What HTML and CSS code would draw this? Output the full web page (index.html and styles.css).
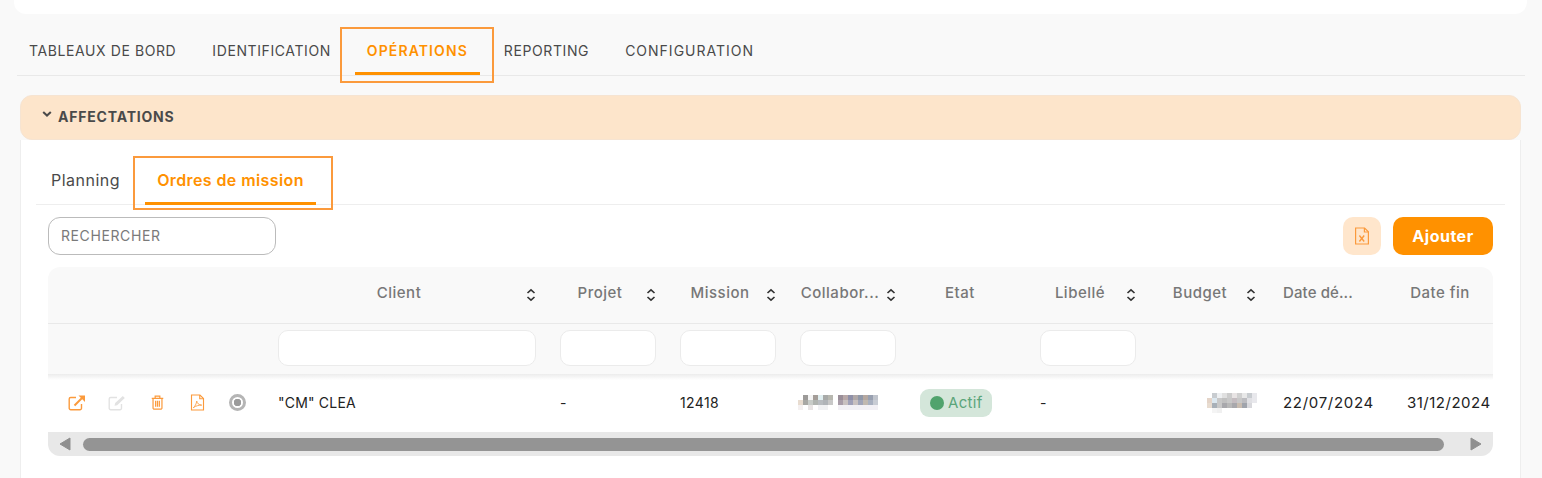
FILE: index.html
```html
<!DOCTYPE html>
<html lang="fr">
<head>
    <meta charset="UTF-8">
    <meta name="viewport" content="width=device-width, initial-scale=1.0">
    <title>Ordres de mission</title>
    <link rel="stylesheet" href="styles.css">
</head>
<body>

    <div class="top-card"></div>

    <nav class="main-tabs">
        <a class="main-tab">TABLEAUX DE BORD</a>
        <a class="main-tab">IDENTIFICATION</a>
        <a class="main-tab active">OPÉRATIONS<span class="mark"></span></a>
        <a class="main-tab">REPORTING</a>
        <a class="main-tab">CONFIGURATION</a>
    </nav>

    <section class="panel">
        <div class="panel-head">
            <svg class="chevron" viewBox="0 0 10 6" width="10" height="6"><path d="M1.2 1 5 4.6 8.8 1" fill="none" stroke="#4a4a4a" stroke-width="2"/></svg>
            <span>AFFECTATIONS</span>
        </div>

        <div class="panel-body">
            <div class="sub-tabs">
                <a class="sub-tab">Planning</a>
                <a class="sub-tab active">Ordres de mission<span class="mark"></span></a>
            </div>

            <div class="toolbar">
                <input class="search" type="text" placeholder="RECHERCHER">
                <div class="actions">
                    <button class="btn-excel" type="button">
                        <svg viewBox="0 0 16 18" width="16" height="18" fill="none" stroke="#fb9a3c" stroke-width="1.2"><path d="M1.6 1h9l3.8 3.8v12.2H1.600z"/><path d="M10.400 1v4h4"/><path d="M5.400 8.500l4.800 6M10.200 8.500l-4.800 6" stroke-width="1.400"/></svg>
                    </button>
                    <button class="btn-add" type="button">Ajouter</button>
                </div>
            </div>

            <div class="table-wrap">
                <table class="grid">
                    <colgroup>
                        <col class="c-actions"><col class="c-client"><col class="c-std"><col class="c-std"><col class="c-std"><col class="c-std"><col class="c-std"><col class="c-std"><col class="c-std"><col class="c-std">
                    </colgroup>
                    <thead>
                        <tr class="head-row">
                            <th></th>
                            <th><div class="th"><span class="th-label">Client</span><svg class="sort" viewBox="0 0 10 14"><path d="M1.500 5 5 1.800 8.500 5M1.500 9 5 12.200 8.500 9"/></svg></div></th>
                            <th><div class="th"><span class="th-label">Projet</span><svg class="sort" viewBox="0 0 10 14"><path d="M1.500 5 5 1.800 8.500 5M1.500 9 5 12.200 8.500 9"/></svg></div></th>
                            <th><div class="th"><span class="th-label">Mission</span><svg class="sort" viewBox="0 0 10 14"><path d="M1.500 5 5 1.800 8.500 5M1.500 9 5 12.200 8.500 9"/></svg></div></th>
                            <th><div class="th"><span class="th-label">Collabor...</span><svg class="sort" viewBox="0 0 10 14"><path d="M1.500 5 5 1.800 8.500 5M1.500 9 5 12.200 8.500 9"/></svg></div></th>
                            <th><div class="th"><span class="th-label">Etat</span><span class="sort"></span></div></th>
                            <th><div class="th"><span class="th-label">Libellé</span><svg class="sort" viewBox="0 0 10 14"><path d="M1.500 5 5 1.800 8.500 5M1.500 9 5 12.200 8.500 9"/></svg></div></th>
                            <th><div class="th"><span class="th-label">Budget</span><svg class="sort" viewBox="0 0 10 14"><path d="M1.500 5 5 1.800 8.500 5M1.500 9 5 12.200 8.500 9"/></svg></div></th>
                            <th><div class="th"><span class="th-label th-date">Date dé...</span><span class="sort"></span></div></th>
                            <th><div class="th"><span class="th-label">Date fin</span><span class="sort"></span></div></th>
                        </tr>
                        <tr class="filter-row">
                            <th></th>
                            <th><input class="filter" type="text"></th>
                            <th><input class="filter" type="text"></th>
                            <th><input class="filter" type="text"></th>
                            <th><input class="filter" type="text"></th>
                            <th></th>
                            <th><input class="filter" type="text"></th>
                            <th></th>
                            <th></th>
                            <th></th>
                        </tr>
                    </thead>
                    <tbody>
                        <tr class="data-row">
                            <td class="row-icons">
                                <div class="icons">
                                    <span class="ic"><svg viewBox="0 0 18 18" width="18" height="18" fill="none" stroke="#fb9a3c" stroke-width="1.400"><path d="M8 3.500H2.700a1.500 1.500 0 0 0-1.500 1.500v9.300a1.500 1.500 0 0 0 1.500 1.500H12a1.500 1.500 0 0 0 1.500-1.500V10"/><path d="M6.500 11.500 14 4" stroke-width="2"/><path d="M10.500 1.500H17V8z" fill="#fb9a3c" stroke="none"/></svg></span>
                                    <span class="ic"><svg viewBox="0 0 18 18" width="18" height="18" fill="none" stroke="#e2e2e2" stroke-width="1.400"><path d="M9 3.500H2.700a1.500 1.500 0 0 0-1.500 1.500v9.300a1.500 1.500 0 0 0 1.500 1.500H12a1.500 1.500 0 0 0 1.500-1.500V10"/><path d="M6.500 11.800l.7-2.800 7.600-7 2 2-7.600 7.200z" fill="#e2e2e2" stroke="none"/></svg></span>
                                    <span class="ic"><svg viewBox="0 0 14 16" width="13" height="15" fill="none" stroke="#fb9a3c" stroke-width="1.300"><path d="M.8 3.500h12.400M4.500 3.500V1.200h5v2.300M2.200 3.500v10.300a1.400 1.400 0 0 0 1.400 1.400h6.800a1.400 1.400 0 0 0 1.400-1.400V3.500M5 6v6.500M7 6v6.500M9 6v6.500"/></svg></span>
                                    <span class="ic"><svg viewBox="0 0 16 18" width="15" height="17" fill="none" stroke="#fb9a3c" stroke-width="1.200"><path d="M1.600 1h9l3.800 3.800v12.200H1.600z"/><path d="M10.400 1v4h4"/><path d="M3.500 14.500c2-1.500 3.200-4 3.700-7 .6 2.500 2 4 5.300 4.300-3-.2-6 .8-9 2.700z" stroke-width=".9"/></svg></span>
                                    <span class="ic"><span class="radio"></span></span>
                                </div>
                            </td>
                            <td class="client">"CM" CLEA</td>
                            <td>-</td>
                            <td>12418</td>
                            <td>
                                <!-- nom flouté dans la capture -->
                                <svg class="blur collab" width="80" height="15" viewBox="0 0 16 3" shape-rendering="crispEdges">
                                    <rect x="1" y="0" width="1" height="1" fill="#9c9a98"/><rect x="2" y="0" width="1" height="1" fill="#f4f4f4"/><rect x="3" y="0" width="1" height="1" fill="#a49d98"/><rect x="4" y="0" width="1" height="1" fill="#e0eef0"/><rect x="5" y="0" width="1" height="1" fill="#a8aaa8"/><rect x="6" y="0" width="1" height="1" fill="#b8b8b0"/>
                                    <rect x="8" y="0" width="1" height="1" fill="#9a8e98"/><rect x="9" y="0" width="1" height="1" fill="#b8a8a8"/><rect x="10" y="0" width="1" height="1" fill="#8f90a8"/><rect x="11" y="0" width="1" height="1" fill="#b0a8a8"/><rect x="12" y="0" width="1" height="1" fill="#9098a8"/><rect x="13" y="0" width="1" height="1" fill="#b5a8a0"/><rect x="14" y="0" width="1" height="1" fill="#98a0b0"/><rect x="15" y="0" width="1" height="1" fill="#c0c4cc"/>
                                    <rect x="0" y="1" width="1" height="1" fill="#e8dcd0"/><rect x="1" y="1" width="1" height="1" fill="#a8a8a4"/><rect x="2" y="1" width="1" height="1" fill="#c8ccc8"/><rect x="3" y="1" width="1" height="1" fill="#b0b4b0"/><rect x="4" y="1" width="1" height="1" fill="#b8bcc0"/><rect x="5" y="1" width="1" height="1" fill="#b0b4b8"/><rect x="6" y="1" width="1" height="1" fill="#c8c8c8"/>
                                    <rect x="8" y="1" width="1" height="1" fill="#a89ca8"/><rect x="9" y="1" width="1" height="1" fill="#c8c0c0"/><rect x="10" y="1" width="1" height="1" fill="#a0a0b8"/><rect x="11" y="1" width="1" height="1" fill="#c8c0c0"/><rect x="12" y="1" width="1" height="1" fill="#a0a4b8"/><rect x="13" y="1" width="1" height="1" fill="#c0b8b0"/><rect x="14" y="1" width="1" height="1" fill="#a8b0c0"/><rect x="15" y="1" width="1" height="1" fill="#c8ccd4"/>
                                    <rect x="0" y="2" width="1" height="1" fill="#f4f0f0"/><rect x="2" y="2" width="1" height="1" fill="#e8e4e4"/><rect x="4" y="2" width="2" height="1" fill="#f0f1f3"/><rect x="8" y="2" width="8" height="1" fill="#f2f0f5"/>
                                </svg>
                            </td>
                            <td><span class="status"><i class="dot"></i>Actif</span></td>
                            <td>-</td>
                            <td>
                                <svg class="blur budget" width="50" height="20" viewBox="0 0 10 4" shape-rendering="crispEdges">
                                    <rect x="1" y="0" width="1" height="1" fill="#c8ccd0"/><rect x="2" y="0" width="1" height="1" fill="#eef0f2"/><rect x="3" y="0" width="1" height="1" fill="#e0e0e0"/><rect x="4" y="0" width="1" height="1" fill="#cccccc"/><rect x="5" y="0" width="1" height="1" fill="#e8e4e4"/><rect x="6" y="0" width="1" height="1" fill="#d0d0d0"/><rect x="7" y="0" width="1" height="1" fill="#e8e8e8"/><rect x="8" y="0" width="1" height="1" fill="#c8ccd0"/><rect x="9" y="0" width="1" height="1" fill="#e8e8ec"/>
                                    <rect x="0" y="1" width="1" height="1" fill="#e4d4c8"/><rect x="1" y="1" width="1" height="1" fill="#dce8f0"/><rect x="2" y="1" width="1" height="1" fill="#c8c8c8"/><rect x="3" y="1" width="1" height="1" fill="#c0c0c0"/><rect x="4" y="1" width="1" height="1" fill="#c8c8c8"/><rect x="5" y="1" width="1" height="1" fill="#c4bcc0"/><rect x="6" y="1" width="1" height="1" fill="#c8c8c8"/><rect x="7" y="1" width="1" height="1" fill="#bcbcc0"/><rect x="8" y="1" width="1" height="1" fill="#e0e0e4"/><rect x="9" y="1" width="1" height="1" fill="#e8e8ec"/>
                                    <rect x="0" y="2" width="1" height="1" fill="#e8dcd0"/><rect x="1" y="2" width="1" height="1" fill="#a8b0b8"/><rect x="2" y="2" width="1" height="1" fill="#c8c8c8"/><rect x="3" y="2" width="1" height="1" fill="#a8a8ac"/><rect x="4" y="2" width="1" height="1" fill="#b8b8b8"/><rect x="5" y="2" width="1" height="1" fill="#a8a8ac"/><rect x="6" y="2" width="1" height="1" fill="#c8bcb0"/><rect x="7" y="2" width="1" height="1" fill="#a0a4ac"/><rect x="8" y="2" width="1" height="1" fill="#d8d8dc"/>
                                    <rect x="1" y="3" width="1" height="1" fill="#f4f4f4"/><rect x="2" y="3" width="1" height="1" fill="#f0f0f0"/>
                                </svg>
                            </td>
                            <td class="date">22/07/2024</td>
                            <td class="date date-end">31/12/2024</td>
                        </tr>
                    </tbody>
                </table>
                <div class="scrollbar">
                    <svg viewBox="0 0 12 14" width="12" height="14"><path d="M11 1v12L1 7z" fill="#8f8f8f" stroke="#8f8f8f" stroke-linejoin="round"/></svg>
                    <div class="thumb"></div>
                    <svg viewBox="0 0 12 14" width="12" height="14"><path d="M1 1v12l10-6z" fill="#8f8f8f" stroke="#8f8f8f" stroke-linejoin="round"/></svg>
                </div>
            </div>
        </div>
    </section>

</body>
</html>
```

FILE: styles.css
```css
* {
    margin: 0;
    padding: 0;
    box-sizing: border-box;
}
body {
    font-family: Inter, "Noto Sans", Arial, sans-serif;
    background-color: #f9f9f9;
    color: #444;
    font-size: 14px;
    height: 478px;
    overflow: hidden;
    padding: 0 17px 0 14px;
}
.top-card {
    height: 14px;
    background-color: #fff;
    border-radius: 0 0 12px 12px;
    margin-right: -2px;
}
.main-tabs {
    display: flex;
    gap: 12px;
    height: 62px;
    margin: 0 0 19px 3px;
    padding-top: 13px;
    border-bottom: 1px solid #e9e9e9;
}
.main-tab {
    position: relative;
    height: 48px;
    padding: 15px 12px 0;
    color: #4a4a4a;
    letter-spacing: .6px;
    white-space: nowrap;
}
.main-tab:last-child {
    letter-spacing: 1px;
}
.main-tab.active,
.sub-tab.active {
    color: #ff9100;
    font-weight: 600;
}
.main-tab.active {
    letter-spacing: 1.1px;
}
.main-tab.active::before,
.sub-tab.active::before {
    content: "";
    position: absolute;
    border: 2px solid #fb9a3c;
    pointer-events: none;
}
.main-tab.active::before {
    top: 0;
    bottom: -8px;
    left: -15px;
    right: -14px;
}
.mark {
    position: absolute;
    left: 0;
    right: 0;
    bottom: 0;
    height: 3px;
    background-color: #ff9100;
}
.panel {
    margin: 0 4px 0 6px;
}
.panel-head {
    display: flex;
    align-items: center;
    gap: 6px;
    height: 45px;
    padding: 0 21px 2px;
    background-color: #fde5cb;
    border: 1px solid #f6e4d2;
    border-radius: 12px;
    font-weight: 700;
    letter-spacing: .8px;
    color: #4a4a4a;
}
.chevron {
    margin-top: -5px;
}
.panel-body {
    background-color: #fff;
    border-left: 1px solid #eee;
    border-right: 1px solid #eee;
    padding: 0 15px;
    height: 340px;
}
.sub-tabs {
    display: flex;
    height: 65px;
    border-bottom: 1px solid #eee;
    padding: 17px 0 0 3px;
}
.sub-tab {
    position: relative;
    height: 48px;
    padding: 13px 12px 0;
    margin-right: 13px;
    font-size: 16px;
    letter-spacing: .5px;
    white-space: nowrap;
    color: #4a4a4a;
}
.sub-tab.active {
    letter-spacing: .4px;
}
.sub-tab.active::before {
    top: -1px;
    bottom: -5px;
    left: -12px;
    right: -17px;
}
.toolbar {
    display: flex;
    justify-content: space-between;
    align-items: center;
    padding: 12px;
}
.search {
    width: 228px;
    height: 38px;
    padding: 0 12px 2px;
    border: 1px solid #bbb;
    border-radius: 12px;
    font-family: inherit;
    font-size: 14px;
    letter-spacing: .6px;
    outline: none;
}
.search::placeholder {
    color: #7a7a7a;
}
.actions {
    display: flex;
    gap: 12px;
}
.btn-excel {
    display: flex;
    align-items: center;
    justify-content: center;
    width: 38px;
    height: 38px;
    border: none;
    border-radius: 10px;
    background-color: #ffe6cc;
}
.btn-add {
    width: 100px;
    height: 38px;
    border: none;
    border-radius: 10px;
    background-color: #ff9100;
    color: #fff;
    font-family: inherit;
    font-size: 16px;
    font-weight: 700;
    letter-spacing: .5px;
}
.table-wrap {
    margin: 0 12px;
    width: 1445px;
    overflow: hidden;
    border-radius: 12px;
}
.grid {
    width: 1448px;
    table-layout: fixed;
    border-collapse: separate;
    border-spacing: 0;
}
.c-actions {
    width: 218px;
}
.c-client {
    width: 282px;
}
.c-std {
    width: 120px;
}
.head-row th {
    height: 57px;
    background-color: #f9f9f9;
    border-bottom: 1px solid #e9e9e9;
    padding: 0 12px;
}
.th {
    display: flex;
    align-items: center;
}
.th-label {
    flex: 1;
    min-width: 0;
    text-align: center;
    font-size: 15px;
    font-weight: 500;
    letter-spacing: .5px;
    color: #777;
    white-space: nowrap;
    margin-top: -5px;
}
.th-date {
    letter-spacing: .1px;
    padding-right: 4px;
}
.sort {
    flex: none;
    width: 10px;
    height: 14px;
    margin-left: 6px;
    fill: none;
    stroke: #333;
    stroke-width: 1.600;
}
.filter-row th {
    height: 50px;
    background-color: #f9f9f9;
    padding: 0 12px;
}
.filter {
    display: block;
    width: 100%;
    height: 36px;
    margin-top: -3px;
    border: 1px solid #ebebeb;
    border-radius: 10px;
    background-color: #fff;
    outline: none;
}
.data-row td {
    height: 58px;
    padding: 0 12px 1px;
    letter-spacing: .4px;
    color: #222;
    white-space: nowrap;
    vertical-align: middle;
    background: linear-gradient(#ececec, #fff 6px);
}
.data-row .row-icons {
    padding-left: 9px;
}
.data-row .client {
    letter-spacing: .2px;
}
.icons {
    display: flex;
    align-items: center;
}
.ic {
    display: flex;
    justify-content: center;
    align-items: center;
    flex: none;
    width: 40px;
    height: 18px;
}
.radio {
    display: block;
    width: 17px;
    height: 17px;
    border: 3px solid #b5b5b5;
    border-radius: 50%;
    background: radial-gradient(circle, #9c9c9c 0 3.500px, #fff 4px);
}
.blur {
    display: block;
}
.collab {
    margin-left: -2px;
}
.budget {
    margin-left: 47px;
}
.status {
    display: inline-flex;
    align-items: center;
    gap: 4px;
    height: 28px;
    padding: 0 9px 0 10px;
    border-radius: 9px;
    background-color: #d4e6da;
    font-size: 15px;
    letter-spacing: .3px;
    color: #5ba57a;
}
.dot {
    width: 14px;
    height: 14px;
    border-radius: 50%;
    background-color: #51a36d;
}
.data-row .date {
    padding-left: 15px;
    font-size: 15px;
    letter-spacing: .7px;
}
.data-row .date-end {
    padding-left: 19px;
    padding-right: 0;
    letter-spacing: .5px;
}
.scrollbar {
    display: flex;
    align-items: center;
    height: 24px;
    padding: 0 11px;
    background-color: #e8e8e8;
    gap: 12px;
}
.thumb {
    flex: 1;
    height: 13px;
    margin-right: 14px;
    border-radius: 7px;
    background-color: #949494;
}
```
